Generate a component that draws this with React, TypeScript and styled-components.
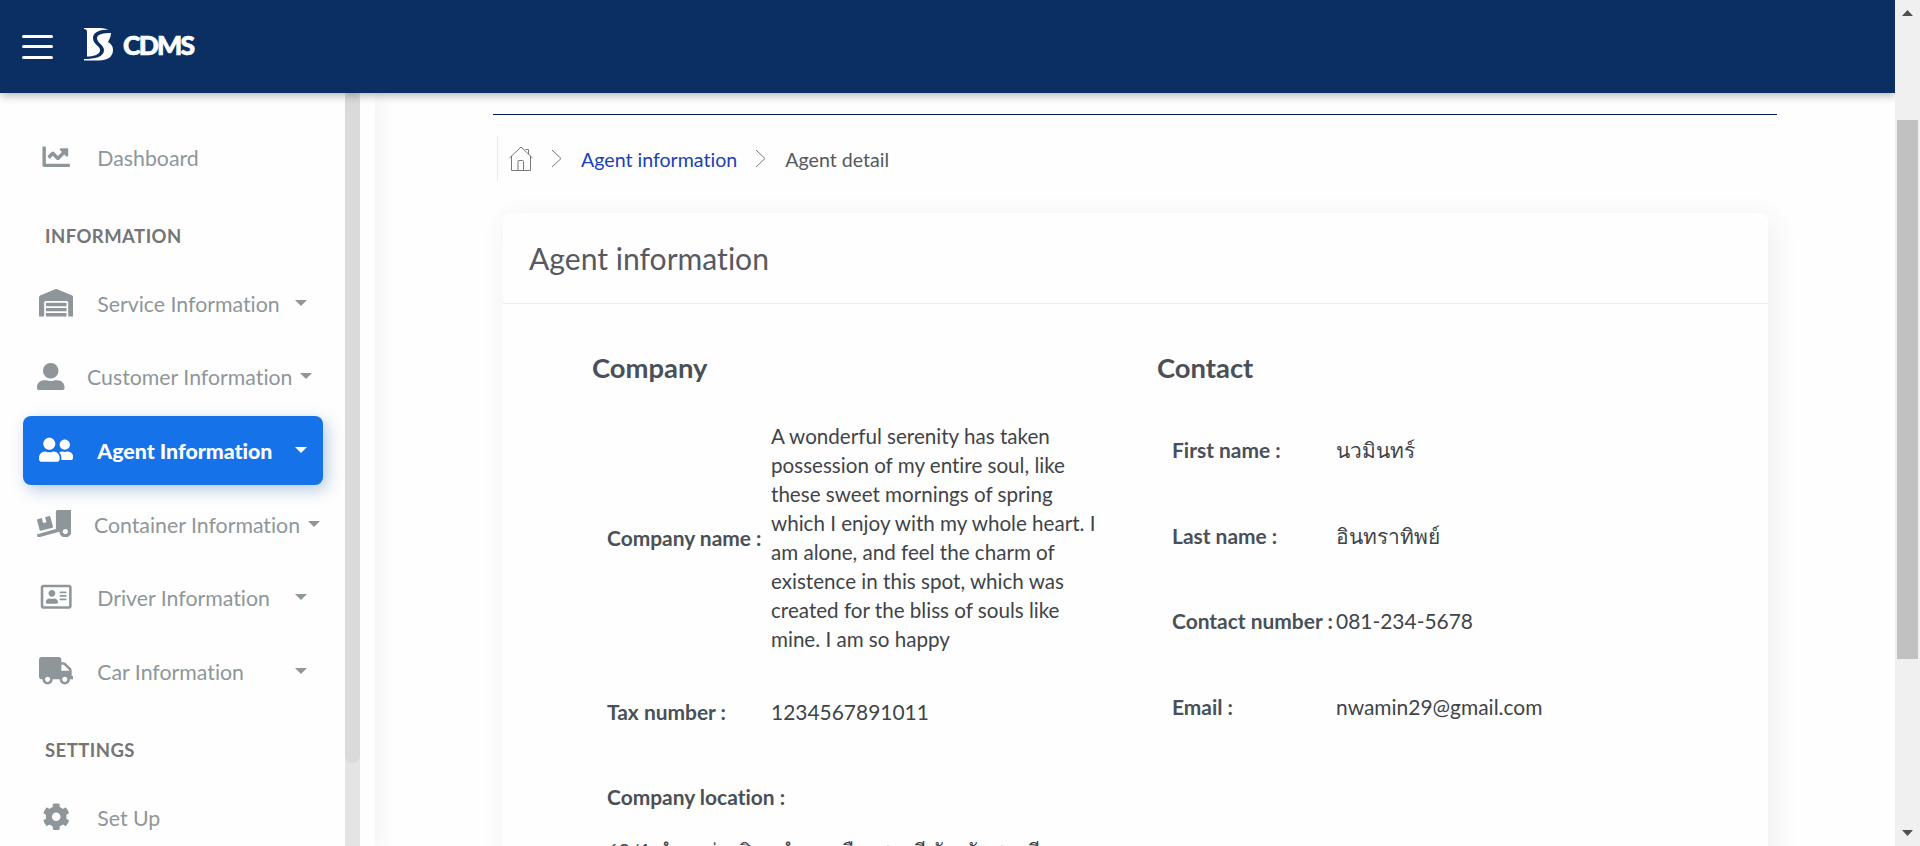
import React from 'react';
import styled, { createGlobalStyle, css } from 'styled-components';
import {
  FaChartLine,
  FaWarehouse,
  FaUserAlt,
  FaUserFriends,
  FaTruckLoading,
  FaRegAddressCard,
  FaTruck,
  FaCog,
} from 'react-icons/fa';
import type { IconType } from 'react-icons';

const GlobalStyle = createGlobalStyle`
  *, *::before, *::after { box-sizing: border-box; }
  body {
    margin: 0;
    background: #fefefe;
    color: #3f4448;
    font-family: Lato, 'Liberation Sans', sans-serif;
    font-size: 20.95px;
    font-variant-ligatures: none;
  }
  h1, h2, p, dl, dd, dt { margin: 0; }
`;

const Screen = styled.div`
  display: flex;
  height: 846px;
  overflow: hidden;
`;

const Page = styled.div`
  display: flex;
  flex-direction: column;
  width: 1895px;
`;

const Topbar = styled.header`
  display: flex;
  align-items: center;
  flex: 0 0 93px;
  padding-left: 22px;
  background: #0b2f63;
  box-shadow: 0 2px 9px rgba(0, 0, 0, 0.32);
  z-index: 2;
`;

const Burger = styled.button`
  display: flex;
  flex-direction: column;
  justify-content: space-between;
  width: 31px;
  height: 24px;
  margin: 0 30px 0 0;
  padding: 0;
  border: 0;
  background: none;

  span {
    height: 3px;
    border-radius: 2px;
    background: #fff;
  }
`;

const LogoMark = styled.svg`
  width: 29px;
  height: 33px;
  margin: -4px 0 0 1px;
`;

const Brand = styled.span`
  margin: 0 0 4px 10px;
  color: #fff;
  font-size: 26.5px;
  font-weight: 900;
  letter-spacing: -1.8px;
  -webkit-text-stroke: 0.7px #fff;
`;

const Body = styled.div`
  display: flex;
  flex: 1;
  min-height: 0;
`;

const Sidebar = styled.aside`
  display: flex;
  width: 375px;
  background: #fefefe;
  box-shadow: 5px 5px 18px rgba(69, 65, 78, 0.06);
`;

const Menu = styled.nav`
  width: 345px;
  height: 100%;
  padding: 30px 22px 0 23px;
`;

const Track = styled.div`
  width: 15px;
  background: #e4e4e4;
`;

const TrackThumb = styled.div`
  height: 670px;
  border-radius: 8px;
  background: #dadada;
`;

const MenuItem = styled.a<{ $active?: boolean; $inset?: number }>`
  display: flex;
  align-items: center;
  height: 69px;
  margin-bottom: 4.6px;
  padding-left: ${(p) => p.$inset ?? 16}px;
  border-radius: 8px;
  color: #8e969a;
  font-size: 21.3px;
  white-space: nowrap;

  ${(p) =>
    p.$active &&
    css`
      background: #1572e8;
      color: #fff;
      font-weight: 900;
      box-shadow: 4px 5px 16px rgba(21, 82, 165, 0.3);
    `}
`;

const IconCell = styled.span<{ $width: number }>`
  display: flex;
  justify-content: center;
  flex: 0 0 ${(p) => p.$width}px;
  margin-top: -2px;
  font-size: 27.5px;

  svg {
    width: 100%;
    height: 1em;
  }
`;

const ItemLabel = styled.span<{ $gap: number; $width: number }>`
  width: ${(p) => p.$width}px;
  margin-left: ${(p) => p.$gap}px;
`;

const Caret = styled.i`
  margin-top: -2px;
  border: 6.5px solid transparent;
  border-top-color: currentColor;
  border-bottom: 0;
`;

const MenuHeading = styled.h2`
  height: 42px;
  margin: 23px 0 12.3px 22px;
  color: #757575;
  font-size: 18.5px;
  font-weight: 700;
  line-height: 42px;
  letter-spacing: 0.45px;
`;

const Content = styled.main`
  flex: 1;
  padding: 21px 118px 0 118px;
`;

const Rule = styled.hr`
  height: 1px;
  margin: 0;
  border: 0;
  background: #001f4d;
`;

const Breadcrumb = styled.nav`
  display: flex;
  align-items: center;
  height: 45px;
  margin: 21px 0 0 4px;
  padding-left: 11px;
  border-left: 1px solid #e9e9e9;
  font-size: 19.6px;
`;

const HomeMark = styled.svg`
  width: 24px;
  height: 25px;
`;

const Chevron = styled.svg`
  width: 12px;
  height: 20px;
  margin: 0 18px;
`;

const Crumb = styled.span<{ $link?: boolean }>`
  padding-top: 1px;
  color: ${(p) => (p.$link ? '#1b3fb5' : '#55595c')};
`;

const Card = styled.section`
  width: 1265px;
  height: 760px;
  margin: 32px 0 0 10px;
  border-radius: 8px;
  background: #fefefe;
  box-shadow: 4px 6px 28px rgba(69, 65, 78, 0.09);
`;

const CardTitle = styled.h1`
  height: 91px;
  padding-left: 26px;
  border-bottom: 1px solid #ebebeb;
  color: #575962;
  font-size: 30.1px;
  font-weight: 400;
  line-height: 90px;
`;

const Columns = styled.div`
  display: grid;
  grid-template-columns: 565px 1fr;
  padding: 44px 0 0 89px;
`;

const GroupTitle = styled.h2`
  color: #495057;
  font-size: 27.4px;
  font-weight: 700;
  line-height: 39px;
`;

const Fields = styled.dl<{ $top: number }>`
  padding: ${(p) => p.$top}px 0 0 15px;
`;

const Field = styled.div<{ $gap: number }>`
  display: grid;
  grid-template-columns: 164px 330px;
  align-items: center;
  margin-bottom: ${(p) => p.$gap}px;
  line-height: 29px;

  dt {
    color: #495057;
    font-weight: 700;
    white-space: nowrap;
  }
`;

const Description = styled.dd`
  font-size: 20.6px;
`;

const Address = styled.p`
  font-size: 20px;
  line-height: 29px;
  white-space: nowrap;
`;

const Scrollbar = styled.div`
  display: flex;
  flex-direction: column;
  align-items: center;
  justify-content: space-between;
  width: 25px;
  padding: 10px 0;
  background: #f0f0f0;
  z-index: 3;
`;

const ScrollThumb = styled.div`
  width: 21px;
  height: 539px;
  margin: 104px 0 171px;
  background: #c1c1c1;
`;

const ScrollArrow = styled.svg`
  width: 11px;
  height: 6px;
`;

interface Entry {
  label: string;
  icon: IconType;
  active?: boolean;
  caret?: boolean;
  inset?: number;
  cell?: number;
  gap?: number;
  width?: number;
}

const information: Entry[] = [
  { label: 'Service Information', icon: FaWarehouse, caret: true },
  { label: 'Customer Information', icon: FaUserAlt, caret: true, inset: 14, cell: 27.5, gap: 22.5, width: 213 },
  { label: 'Agent Information', icon: FaUserFriends, caret: true, active: true },
  { label: 'Container Information', icon: FaTruckLoading, caret: true, inset: 14, gap: 22.5, width: 213.7 },
  { label: 'Driver Information', icon: FaRegAddressCard, caret: true },
  { label: 'Car Information', icon: FaTruck, caret: true },
];

function NavEntry({ label, icon: Icon, active, caret, inset, cell = 34.4, gap = 23.9, width = 198.2 }: Entry) {
  return (
    <MenuItem $active={active} $inset={inset}>
      <IconCell $width={cell}>
        <Icon />
      </IconCell>
      <ItemLabel $gap={gap} $width={width}>
        {label}
      </ItemLabel>
      {caret && <Caret />}
    </MenuItem>
  );
}

function Separator() {
  return (
    <Chevron viewBox="0 0 12 20" fill="none" stroke="#77777c" strokeWidth="1">
      <path d="M1 1 10 9.500 1 18" />
    </Chevron>
  );
}

export default function App() {
  return (
    <>
      <GlobalStyle />
      <Screen>
        <Page>
          <Topbar>
            <Burger aria-label="Menu">
              <span />
              <span />
              <span />
            </Burger>
            <LogoMark viewBox="0 0 29 33" fill="#fff">
              <path d="M0 0H17Q22 .3 25 2C17 1 9 4 9 10 9 17 17 18 16 23 15 27 9 28.500 3 28.500V3.500Q3 1.500 0 1Z" />
              <path d="M27 5C27 9 25 12 24 14 27 16 29 18 29 22 29 29 23 32.500 15 32.500H0V31C11 31 20 29 20 22 20 17 13 15 13 10 13 6 20 5 27 5Z" />
            </LogoMark>
            <Brand>CDMS</Brand>
          </Topbar>
          <Body>
            <Sidebar>
              <Menu>
                <NavEntry label="Dashboard" icon={FaChartLine} />
                <MenuHeading>INFORMATION</MenuHeading>
                {information.map((entry) => (
                  <NavEntry key={entry.label} {...entry} />
                ))}
                <MenuHeading>SETTINGS</MenuHeading>
                <NavEntry label="Set Up" icon={FaCog} />
              </Menu>
              <Track>
                <TrackThumb />
              </Track>
            </Sidebar>
            <Content>
              <Rule />
              <Breadcrumb>
                <HomeMark viewBox="0 0 24 25" fill="none" stroke="#77777c" strokeWidth="1">
                  <path d="M.5 12 12 1 23.500 12M2.500 10V24.500H21.500V10M9 24V15.500Q9 14.500 10 14.500H13.500Q14.500 14.500 14.500 15.500V24M16.500 3.500H19.500V8" />
                </HomeMark>
                <Separator />
                <Crumb $link>Agent information</Crumb>
                <Separator />
                <Crumb>Agent detail</Crumb>
              </Breadcrumb>
              <Card>
                <CardTitle>Agent information</CardTitle>
                <Columns>
                  <div>
                    <GroupTitle>Company</GroupTitle>
                    <Fields $top={34.5}>
                      <Field $gap={43}>
                        <dt>Company name :</dt>
                        <Description>
                          A wonderful serenity has taken possession of my entire soul, like these sweet mornings of
                          spring which I enjoy with my whole heart. I am alone, and feel the charm of existence in this
                          spot, which was created for the bliss of souls like mine. I am so happy
                        </Description>
                      </Field>
                      <Field $gap={56}>
                        <dt>Tax number :</dt>
                        <dd>1234567891011</dd>
                      </Field>
                      <Field $gap={25}>
                        <dt>Company location :</dt>
                      </Field>
                      <Address>69/1 ตำบลอ่างศิลา อำเภอเมืองชลบุรี จังหวัดชลบุรี</Address>
                    </Fields>
                  </div>
                  <div>
                    <GroupTitle>Contact</GroupTitle>
                    <Fields $top={48}>
                      <Field $gap={56.5}>
                        <dt>First name :</dt>
                        <dd>นวมินทร์</dd>
                      </Field>
                      <Field $gap={56.5}>
                        <dt>Last name :</dt>
                        <dd>อินทราทิพย์</dd>
                      </Field>
                      <Field $gap={56.5}>
                        <dt>Contact number :</dt>
                        <dd>081-234-5678</dd>
                      </Field>
                      <Field $gap={0}>
                        <dt>Email :</dt>
                        <dd>nwamin29@gmail.com</dd>
                      </Field>
                    </Fields>
                  </div>
                </Columns>
              </Card>
            </Content>
          </Body>
        </Page>
        <Scrollbar>
          <ScrollArrow viewBox="0 0 11 6" fill="#505050">
            <path d="M5.500 0 11 6H0Z" />
          </ScrollArrow>
          <ScrollThumb />
          <ScrollArrow viewBox="0 0 11 6" fill="#505050">
            <path d="M0 0H11L5.500 6Z" />
          </ScrollArrow>
        </Scrollbar>
      </Screen>
    </>
  );
}
